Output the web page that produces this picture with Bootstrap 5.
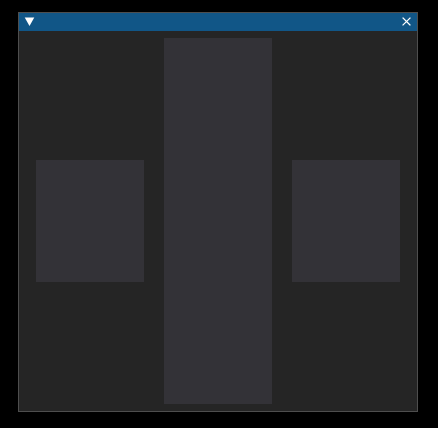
<!DOCTYPE html>
<html lang="en">
<head>
<meta charset="utf-8">
<meta name="viewport" content="width=device-width, initial-scale=1">
<title>Panel</title>
<link href="https://cdn.jsdelivr.net/npm/bootstrap@5.3.0/dist/css/bootstrap.min.css" rel="stylesheet">
<style>
body { background: #000; padding: 12px 20px 16px 18px; }
.tool-window { background: #252525; border: 1px solid #4e4e4e; }
.title-bar { background: #115687; height: 18px; padding: 0 4px; }
.title-bar .btn { width: 14px; height: 18px; border-radius: 0; color: #fff; }
.pad-grid { display: grid; grid-template-columns: repeat(3, 1fr); grid-template-rows: repeat(3, 1fr); column-gap: 20px; padding: 7px 17px; }
.pad-cell { background: #333237; grid-row: 2; }
.pad-tall { grid-row: 1 / -1; grid-column: 2; }
.pad-left { grid-column: 1; }
.pad-right { grid-column: 3; }
</style>
</head>
<body class="min-vh-100 d-flex">
<main class="tool-window flex-fill d-flex flex-column">
  <header class="title-bar d-flex align-items-center justify-content-between">
    <button type="button" class="btn border-0 p-0 d-flex align-items-center justify-content-center" aria-label="Collapse">
      <svg width="14" height="18" viewBox="0 0 14 18" aria-hidden="true"><path d="M1.7 4.4h9.6L6.5 13z" fill="currentColor"/></svg>
    </button>
    <button type="button" class="btn border-0 p-0 d-flex align-items-center justify-content-center" aria-label="Close">
      <svg width="14" height="18" viewBox="0 0 14 18" aria-hidden="true"><path d="M4 5l7 7M11 5l-7 7" fill="none" stroke="currentColor" stroke-width="1.2" stroke-linecap="square"/></svg>
    </button>
  </header>
  <div class="pad-grid flex-fill">
    <div class="pad-cell pad-left"></div>
    <div class="pad-cell pad-tall"></div>
    <div class="pad-cell pad-right"></div>
  </div>
</main>
<script src="https://cdn.jsdelivr.net/npm/bootstrap@5.3.0/dist/js/bootstrap.bundle.min.js"></script>
</body>
</html>
